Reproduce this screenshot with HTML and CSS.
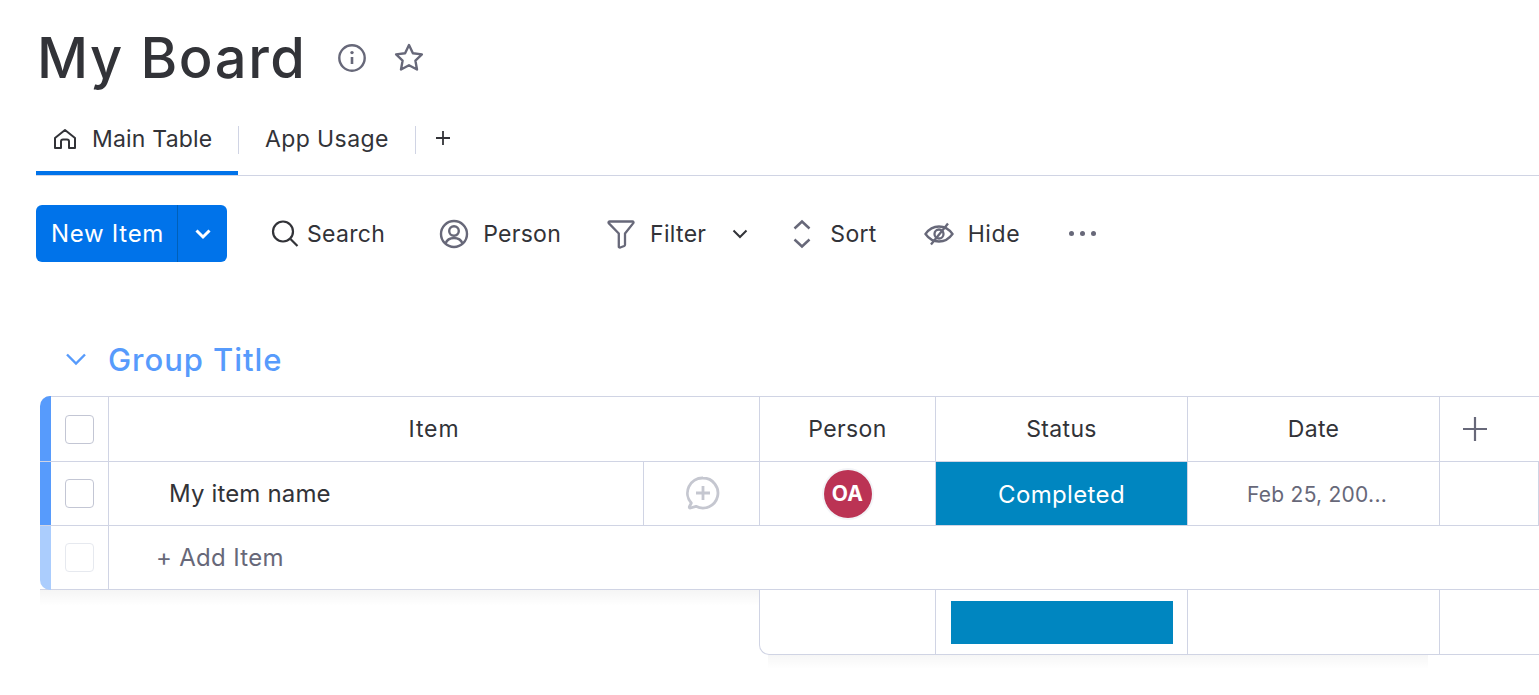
FILE: index.html
```html
<!DOCTYPE html>
<html lang="en">
<head>
    <meta charset="UTF-8">
    <meta name="viewport" content="width=device-width, initial-scale=1.0">
    <title>My Board</title>
    <link rel="stylesheet" href="styles.css">
</head>
<body>
    <!-- Board header -->
    <header class="board-head">
        <h1 class="board-title">My Board</h1>
        <svg class="icon head-info" width="30" height="30" viewBox="0 0 30 30"><circle cx="15" cy="15" r="12.7" stroke-width="2.4"/><path d="M15 14v7" stroke-width="2.6"/><circle class="dot" cx="15" cy="9.6" r="1.7"/></svg>
        <svg class="icon head-star" width="32" height="32" viewBox="0 0 32 32"><path d="M16 3l3.900 8.200 9 1.200-6.500 6.200 1.600 8.900-8-4.300-8 4.300 1.600-8.900-6.500-6.200 9-1.200z" stroke-width="2.4" stroke-linejoin="round"/></svg>
    </header>

    <!-- Tabs -->
    <nav class="tabs">
        <div class="tab tab-active">
            <svg class="icon icon-dark" width="26" height="24" viewBox="0 0 26 24"><path d="M3 11L13 3l10 8v10h-6v-6.500a2 2 0 0 0-2-2h-4a2 2 0 0 0-2 2V21H3z" stroke-width="2" stroke-linejoin="round"/></svg>
            <span>Main Table</span>
        </div>
        <div class="tab-sep"></div>
        <div class="tab tab-plain"><span>App Usage</span></div>
        <div class="tab-sep"></div>
        <svg class="icon icon-dark tab-add" width="16" height="16" viewBox="0 0 16 16"><path d="M8 1v14M1 8h14" stroke-width="1.800"/></svg>
    </nav>

    <!-- Toolbar -->
    <div class="toolbar">
        <div class="new-item">
            <span class="new-item-label">New Item</span>
            <span class="new-item-arrow">
                <svg class="icon icon-white" width="18" height="12" viewBox="0 0 18 12"><path d="M2.500 2.500L9 9l6.500-6.500" stroke-width="3"/></svg>
            </span>
        </div>
        <div class="tool tool-search">
            <svg class="icon icon-dark" width="30" height="30" viewBox="0 0 30 30"><circle cx="13" cy="12.500" r="10" stroke-width="2.200"/><path d="M20.500 20l7 7" stroke-width="2.200"/></svg>
            <span>Search</span>
        </div>
        <div class="tool tool-person">
            <svg class="icon" width="30" height="30" viewBox="0 0 30 30"><circle cx="15" cy="15" r="13" stroke-width="2.400"/><circle cx="15" cy="12" r="4.800" stroke-width="2.400"/><path d="M6.500 24.500c1.500-4 4.500-5.500 8.500-5.500s7 1.500 8.500 5.500" stroke-width="2.400"/></svg>
            <span>Person</span>
        </div>
        <div class="tool tool-filter">
            <svg class="icon" width="30" height="30" viewBox="0 0 30 30"><path d="M2.500 3.500a1 1 0 0 1 1-1h23a1 1 0 0 1 .8 1.600L19 14.500v11.200a1.500 1.500 0 0 1-.8 1.300l-4 1.500a1 1 0 0 1-1.400-1V14.500L2.700 4.100z" stroke-width="2.300" stroke-linejoin="round"/></svg>
            <span>Filter</span>
            <svg class="icon icon-dark filter-arrow" width="18" height="12" viewBox="0 0 18 12"><path d="M2.500 2.500L9 9l6.500-6.500" stroke-width="2"/></svg>
        </div>
        <div class="tool tool-sort">
            <svg class="icon" width="20" height="30" viewBox="0 0 20 30"><path d="M2.500 9.500L10 2.500l7.500 7M2.500 20.500l7.500 7 7.500-7" stroke-width="2.500"/></svg>
            <span>Sort</span>
        </div>
        <div class="tool tool-hide">
            <svg class="icon" width="30" height="26" viewBox="0 0 30 26"><path d="M1.500 13C5 8 9.500 5.500 15 5.500S25 8 28.500 13C25 18 20.500 20.500 15 20.500S5 18 1.500 13z" stroke-width="2.300"/><circle cx="15" cy="13" r="4.500" stroke-width="2.300"/><path d="M24 2.500L7 23.500" stroke-width="2.300"/></svg>
            <span>Hide</span>
        </div>
        <div class="tool-more"><i></i><i></i><i></i></div>
    </div>

    <!-- Group -->
    <section class="group">
        <div class="group-head">
            <svg class="icon icon-blue" width="22" height="14" viewBox="0 0 22 14"><path d="M2 2.500l9 9 9-9" stroke-width="2.400"/></svg>
            <h2 class="group-title">Group Title</h2>
        </div>

        <div class="table">
            <div class="row row-head">
                <div class="bar bar-top"></div>
                <div class="cell"><div class="check"></div></div>
                <div class="cell cell-item">Item</div>
                <div class="cell">Person</div>
                <div class="cell">Status</div>
                <div class="cell">Date</div>
                <div class="cell cell-plus">
                    <svg class="icon" width="26" height="26" viewBox="0 0 26 26"><path d="M13 1v24M1 13h24" stroke-width="2.200"/></svg>
                </div>
            </div>

            <div class="row row-body">
                <div class="bar"></div>
                <div class="cell"><div class="check"></div></div>
                <div class="cell cell-name">My item name</div>
                <div class="cell">
                    <svg class="icon icon-faded comment-add" width="36" height="36" viewBox="0 0 36 36"><path d="M18 3a15 15 0 1 1-7 28.300L5.500 33c-1 .2-1.500-.5-1-1.500l1.800-3.500A15 15 0 0 1 18 3z" stroke-width="2.800" stroke-linejoin="round"/><path d="M18 11v14M11 18h14" stroke-width="2.800"/></svg>
                </div>
                <div class="cell"><div class="avatar">OA</div></div>
                <div class="cell cell-status">Completed</div>
                <div class="cell cell-date">Feb 25, 200...</div>
                <div class="cell"></div>
            </div>

            <div class="row row-add">
                <div class="bar bar-light"></div>
                <div class="cell"><div class="check check-light"></div></div>
                <div class="cell cell-add">+ Add Item</div>
            </div>

            <div class="row row-summary">
                <div class="cell"></div>
                <div class="cell"><div class="summary-bar"></div></div>
                <div class="cell"></div>
                <div class="cell"></div>
            </div>
        </div>
    </section>
</body>
</html>
```

FILE: styles.css
```css
* {
    box-sizing: border-box;
}
html, body {
    height: 100%;
    overflow: hidden;
}
body {
    margin: 0;
    background: white;
    color: #323338;
    font-family: "Inter", "Liberation Sans", sans-serif;
    font-size: 23px;
}
.icon {
    display: block;
    flex: none;
    fill: none;
    stroke: #676879;
}
.icon .dot {
    fill: #676879;
    stroke: none;
}
.icon-dark { stroke: #323338; }
.icon-white { stroke: white; }
.icon-blue { stroke: #579bfc; }
.icon-faded { stroke: #c5c7d0; }

/* Board header */
.board-head {
    display: flex;
    align-items: center;
    height: 116px;
    padding-left: 37px;
}
.board-title {
    margin: 0;
    width: 300px;
    font-size: 56px;
    font-weight: 500;
    line-height: 116px;
    letter-spacing: 1.6px;
}
.head-star {
    margin-left: 26px;
}

/* Tabs */
.tabs {
    display: flex;
    align-items: center;
    height: 60px;
    margin-left: 36px;
    border-bottom: 1px solid #d0d4e4;
    letter-spacing: 0.2px;
}
.tab {
    display: flex;
    align-items: center;
    height: 59px;
    padding-bottom: 14px;
}
.tab-active {
    width: 202px;
    gap: 14px;
    padding-left: 16px;
    padding-bottom: 10px;
    border-bottom: 4px solid #0073ea;
}
.tab-plain {
    width: 176px;
    padding-left: 26px;
    letter-spacing: 0.4px;
}
.tab-sep {
    width: 1px;
    height: 28px;
    margin-bottom: 12px;
    background: #d0d4e4;
}
.tab-add {
    margin: 0 0 15px 19px;
}

/* Toolbar */
.toolbar {
    display: flex;
    align-items: center;
    height: 57px;
    margin: 29px 0 0 36px;
    letter-spacing: 0.3px;
}
.new-item {
    display: flex;
    width: 191px;
    height: 57px;
    border-radius: 6px;
    background: #0073ea;
    color: white;
    font-size: 24px;
    letter-spacing: 0.7px;
}
.new-item-label {
    width: 142px;
    padding-left: 15px;
    line-height: 57px;
    border-right: 1px solid #0060b9;
}
.new-item-arrow {
    display: flex;
    flex: 1;
    align-items: center;
    justify-content: center;
}
.tool {
    display: flex;
    align-items: center;
    gap: 14px;
}
.tool-search {
    gap: 7px;
    margin-left: 43px;
}
.tool-person {
    margin-left: 54px;
}
.tool-filter {
    margin-left: 45px;
}
.filter-arrow {
    margin-left: 11px;
}
.tool-sort {
    gap: 18px;
    margin-left: 43px;
}
.tool-hide {
    margin-left: 47px;
    letter-spacing: 0.6px;
}
.tool-more {
    display: flex;
    gap: 6px;
    margin-left: 49px;
}
.tool-more i {
    width: 5px;
    height: 5px;
    border-radius: 50%;
    background: #676879;
}

/* Group */
.group {
    margin-top: 73px;
}
.group-head {
    display: flex;
    align-items: center;
    gap: 21px;
    height: 61px;
    padding: 0 0 13px 65px;
}
.group-title {
    margin: 0;
    font-size: 31px;
    font-weight: 500;
    letter-spacing: 0.95px;
    color: #579bfc;
}

/* Table */
.table {
    margin-left: 40px;
    width: 1499px;
}
.row {
    display: grid;
    grid-template-columns: 11px 58px 535px 116px 176px 252px 252px 1fr;
    background: white;
    border-bottom: 1px solid #d0d4e4;
}
.row-head {
    height: 66px;
    border-top: 1px solid #d0d4e4;
    border-top-left-radius: 10px;
    letter-spacing: 0.35px;
}
.row-body {
    height: 64px;
    font-size: 24px;
}
.row-add {
    position: relative;
    height: 64px;
    grid-template-columns: 11px 58px 1fr;
    font-size: 24px;
}
/* soft shadow under the frozen left part */
.row-add::after {
    content: "";
    position: absolute;
    top: 100%;
    left: 0;
    width: 719px;
    height: 16px;
    margin-top: 1px;
    background: linear-gradient(rgba(0, 0, 0, 0.04), transparent);
}
.row-summary {
    position: relative;
    height: 65px;
    margin-left: 719px;
    grid-template-columns: 176px 252px 252px 1fr;
    border-left: 1px solid #d0d4e4;
    border-bottom-left-radius: 10px;
}
.row-summary::after {
    content: "";
    position: absolute;
    top: 100%;
    left: 8px;
    width: 660px;
    height: 14px;
    margin-top: 1px;
    background: linear-gradient(rgba(0, 0, 0, 0.035), transparent);
}
.bar {
    background: #579bfc;
}
.bar-top {
    border-top-left-radius: 10px;
    margin-top: -1px;
}
.bar-light {
    background: #abcdfd;
    border-bottom-left-radius: 10px;
    margin-bottom: -1px;
}
.cell {
    display: flex;
    align-items: center;
    justify-content: center;
    min-width: 0;
    border-right: 1px solid #d0d4e4;
}
.cell-item {
    grid-column: span 2;
    letter-spacing: 0.9px;
}
.cell-plus {
    justify-content: flex-start;
    padding-left: 22px;
    border-right: 0;
}
.cell-name {
    justify-content: flex-start;
    padding-left: 60px;
    letter-spacing: 0.15px;
}
.comment-add {
    margin: 0 0 2px 2px;
}
.cell-status {
    padding-top: 2px;
    background: #0086c0;
    color: white;
    letter-spacing: 0.35px;
}
.cell-date {
    padding-top: 1px;
    padding-left: 7px;
    font-size: 21px;
    letter-spacing: 0.25px;
    color: #676879;
}
.cell-add {
    justify-content: flex-start;
    padding-left: 47px;
    letter-spacing: 0.3px;
    color: #676879;
    border-right: 0;
}
.check {
    width: 29px;
    height: 29px;
    border: 1px solid #c3c6d4;
    border-radius: 4px;
}
.check-light {
    border-color: #e6e9ef;
}
.avatar {
    display: flex;
    align-items: center;
    justify-content: center;
    width: 48px;
    height: 48px;
    border-radius: 50%;
    background: #bb3354;
    box-shadow: 0 0 0 2px #f3f4f7;
    color: white;
    font-size: 21px;
    font-weight: 700;
    letter-spacing: 0.3px;
}
.row-summary .cell:last-child {
    border-right: 0;
}
.summary-bar {
    width: 222px;
    height: 43px;
    margin-top: 1px;
    background: #0086c0;
}
```
